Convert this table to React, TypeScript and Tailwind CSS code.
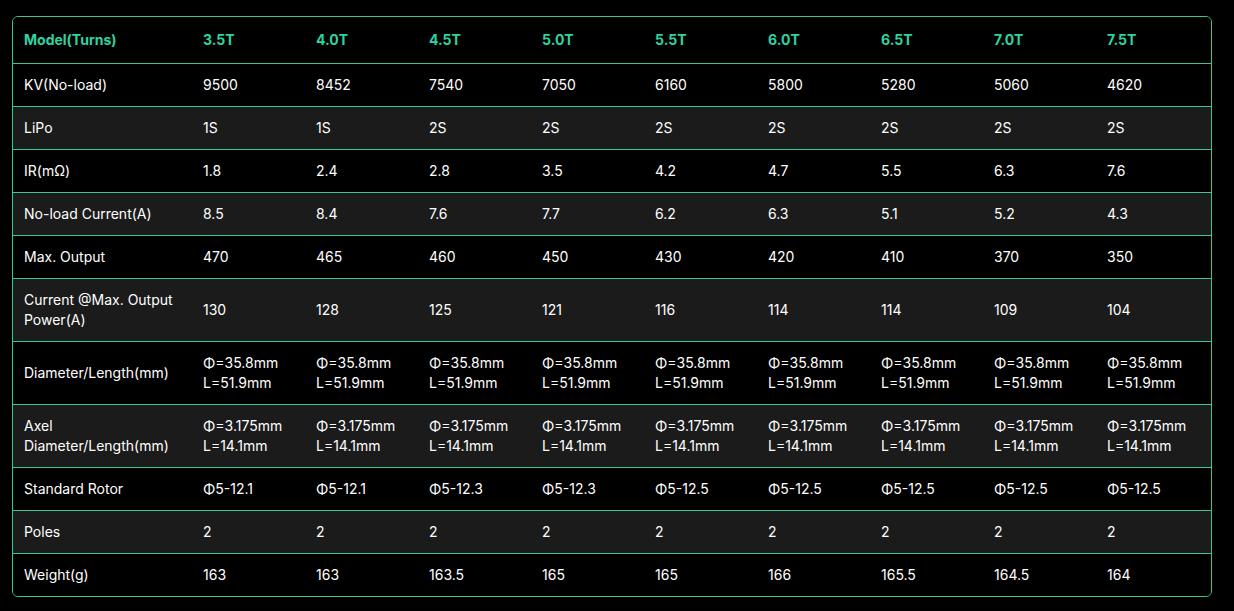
const header = ["3.5T", "4.0T", "4.5T", "5.0T", "5.5T", "6.0T", "6.5T", "7.0T", "7.5T"];

type Row = { label: string[]; values: (string | string[])[] };

const dia = ["Φ=35.8mm", "L=51.9mm"];
const axel = ["Φ=3.175mm", "L=14.1mm"];

const rows: Row[] = [
  { label: ["KV(No-load)"], values: ["9500", "8452", "7540", "7050", "6160", "5800", "5280", "5060", "4620"] },
  { label: ["LiPo"], values: ["1S", "1S", "2S", "2S", "2S", "2S", "2S", "2S", "2S"] },
  { label: ["IR(mΩ)"], values: ["1.8", "2.4", "2.8", "3.5", "4.2", "4.7", "5.5", "6.3", "7.6"] },
  { label: ["No-load Current(A)"], values: ["8.5", "8.4", "7.6", "7.7", "6.2", "6.3", "5.1", "5.2", "4.3"] },
  { label: ["Max. Output"], values: ["470", "465", "460", "450", "430", "420", "410", "370", "350"] },
  { label: ["Current @Max. Output", "Power(A)"], values: ["130", "128", "125", "121", "116", "114", "114", "109", "104"] },
  { label: ["Diameter/Length(mm)"], values: Array(9).fill(dia) },
  { label: ["Axel", "Diameter/Length(mm)"], values: Array(9).fill(axel) },
  { label: ["Standard Rotor"], values: ["Φ5-12.1", "Φ5-12.1", "Φ5-12.3", "Φ5-12.3", "Φ5-12.5", "Φ5-12.5", "Φ5-12.5", "Φ5-12.5", "Φ5-12.5"] },
  { label: ["Poles"], values: ["2", "2", "2", "2", "2", "2", "2", "2", "2"] },
  { label: ["Weight(g)"], values: ["163", "163", "163.5", "165", "165", "166", "165.5", "164.5", "164"] },
];

const colW = ["w-[190px]", "w-[113px]", "w-[113px]", "w-[113px]", "w-[113px]", "w-[113px]", "w-[113px]", "w-[113px]", "w-[113px]", "w-[104px]"];

function Cell({ lines, idx }: { lines: string[]; idx: number }) {
  return (
    <div className={`${colW[idx]} shrink-0 flex flex-col justify-center ${idx === 0 ? "pl-[11px]" : ""}`}>
      {lines.map((l, i) => (
        <span key={i} className="block leading-5 whitespace-nowrap">
          {l}
        </span>
      ))}
    </div>
  );
}

export default function App() {
  return (
    <div className="min-h-screen bg-black pt-4 pl-3 text-[14px] text-white" style={{ fontFamily: "Inter, 'Noto Sans', sans-serif" }}>
      <div className="w-[1200px] rounded-md border border-[#3cc39e] overflow-hidden">
        <div className="flex h-[47px] border-b border-[#3cc39e] bg-black font-bold text-[#2ed3a2]">
          <Cell lines={["Model(Turns)"]} idx={0} />
          {header.map((h, i) => (
            <Cell key={h} lines={[h]} idx={i + 1} />
          ))}
        </div>
        {rows.map((r, ri) => {
          const tall = r.label.length > 1 || Array.isArray(r.values[0]);
          const last = ri === rows.length - 1;
          return (
            <div
              key={ri}
              className={`flex ${last ? "h-[42px]" : tall ? "h-[63px] border-b border-[#3cc39e]" : "h-[43px] border-b border-[#3cc39e]"} ${ri % 2 === 1 ? "bg-[#1b1b1b]" : "bg-black"}`}
            >
              <Cell lines={r.label} idx={0} />
              {r.values.map((v, i) => (
                <Cell key={i} lines={Array.isArray(v) ? v : [v]} idx={i + 1} />
              ))}
            </div>
          );
        })}
      </div>
    </div>
  );
}
